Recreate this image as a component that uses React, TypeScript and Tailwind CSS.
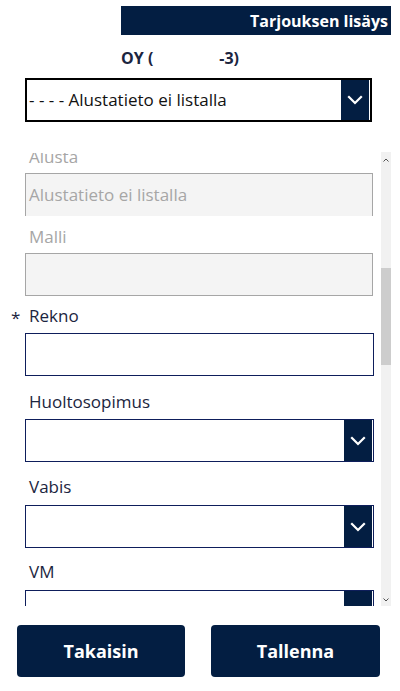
import React from "react"

const navy = "bg-[#031e42]"

function Chevron() {
  return (
    <svg width="16" height="10" viewBox="0 0 16 10" fill="none">
      <path d="M2 2 L8 8 L14 2" stroke="white" strokeWidth="2.2" strokeLinecap="square" />
    </svg>
  )
}

function Label({ text, disabled, required }: { text: string; disabled?: boolean; required?: boolean }) {
  return (
    <div className="relative h-[22px] pl-[29px] text-[17px] leading-[22px]">
      {required && <span className="absolute left-[11px] top-[2px] text-[#1b2540]">*</span>}
      <span className={disabled ? "text-[#a6a6a6]" : "text-[#1b2540]"}>{text}</span>
    </div>
  )
}

function Select({ clipped }: { clipped?: boolean }) {
  return (
    <div className="ml-[25px] flex h-[43px] w-[349px] border border-[#0e1e5b] bg-white">
      <div className="flex-1" />
      <div className={`mr-[1px] flex w-[28px] items-center justify-center ${navy}`}>
        {!clipped && <Chevron />}
      </div>
    </div>
  )
}

export default function App() {
  return (
    <div className="relative h-[691px] w-[400px] overflow-hidden bg-white" style={{ fontFamily: '"Open Sans", sans-serif' }}>
      {/* header */}
      <div className="pl-[121px] pr-[9px] pt-[6px]">
        <div className={`flex h-[29px] items-center justify-end pr-[3px] ${navy}`}>
          <span className="text-[16px] font-bold text-white">Tarjouksen lisäys</span>
        </div>
      </div>

      <div className="mt-[12px] flex h-[22px] pl-[121px] text-[16px] font-bold leading-[22px] text-[#1b2540]">
        <span>OY (</span>
        <span className="w-[66px]" />
        <span>-3)</span>
      </div>

      {/* top dropdown */}
      <div className="ml-[25px] mt-[9px] flex h-[44px] w-[347px] border-2 border-black">
        <div className="flex flex-1 items-center pl-[2px] text-[17px] text-[#111]">- - - - Alustatieto ei listalla</div>
        <div className={`mr-[1px] flex w-[28px] items-center justify-center ${navy}`}>
          <Chevron />
        </div>
      </div>

      {/* scroll area */}
      <div className="mt-[28px] flex h-[456px]">
        <div className="w-[381px] pt-[3px]">
          <div className="h-[453px] overflow-hidden">
            <div className="-mt-[7px]">
              <Label text="Alusta" disabled />
              <div className="ml-[25px] mt-[5px] flex h-[43px] w-[348px] items-center border border-b-0 border-[#a6a6a6] bg-[#f4f4f4] pl-[3px] text-[17px] text-[#a6a6a6]">
                Alustatieto ei listalla
              </div>

              <div className="mt-[10px]">
                <Label text="Malli" disabled />
              </div>
              <div className="ml-[25px] mt-[5px] h-[43px] w-[348px] border border-[#a6a6a6] bg-[#f4f4f4]" />

              <div className="mt-[9px]">
                <Label text="Rekno" required />
              </div>
              <div className="ml-[25px] mt-[6px] h-[43px] w-[349px] border border-[#0e1e5b] bg-white" />

              <div className="mt-[15px]">
                <Label text="Huoltosopimus" />
              </div>
              <div className="mt-[6px]">
                <Select />
              </div>

              <div className="mt-[14px]">
                <Label text="Vabis" />
              </div>
              <div className="mt-[7px]">
                <Select />
              </div>

              <div className="mt-[13px]">
                <Label text="VM" />
              </div>
              <div className="mt-[7px]">
                <Select clipped />
              </div>
            </div>
          </div>
        </div>

        {/* scrollbar */}
        <div className="mt-[2px] flex w-[10px] flex-col items-center bg-[#f1f1f1]">
          <svg width="6" height="4" viewBox="0 0 6 4" className="mt-[6px]">
            <path d="M0.5 3.5 L3 1 L5.5 3.5" stroke="#505050" strokeWidth="1" fill="none" />
          </svg>
          <div className="mt-[106px] h-[97px] w-[10px] bg-[#cdcdcd]" />
          <div className="flex-1" />
          <svg width="6" height="4" viewBox="0 0 6 4" className="mb-[4px]">
            <path d="M0.5 0.5 L3 3 L5.5 0.5" stroke="#505050" strokeWidth="1" fill="none" />
          </svg>
        </div>
      </div>

      {/* buttons */}
      <div className="mt-[19px] flex gap-[26px] pl-[17px]">
        <button className={`flex h-[52px] w-[168px] items-center justify-center rounded-[4px] text-[18px] font-bold text-white ${navy}`}>
          Takaisin
        </button>
        <button className={`flex h-[52px] w-[169px] items-center justify-center rounded-[4px] text-[18px] font-bold text-white ${navy}`}>
          Tallenna
        </button>
      </div>
    </div>
  )
}
